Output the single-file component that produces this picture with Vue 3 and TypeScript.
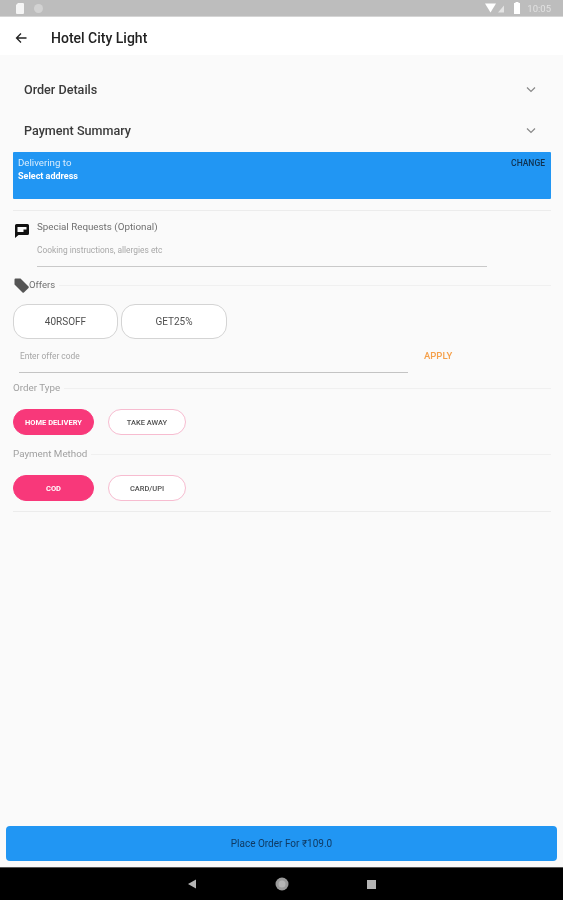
<script setup lang="ts">
import { ref } from 'vue';

const offers = ['40RSOFF', 'GET25%'];
const orderTypes = ['HOME DELIVERY', 'TAKE AWAY'];
const paymentMethods = ['COD', 'CARD/UPI'];

const orderType = ref('HOME DELIVERY');
const paymentMethod = ref('COD');
</script>

<template>
  <div class="screen">
    <div class="status-bar">
      <div class="status-left">
        <svg width="8" height="11" viewBox="0 0 8 11"><path d="M2 0h5a1 1 0 0 1 1 1v9a1 1 0 0 1-1 1H1a1 1 0 0 1-1-1V2z" fill="#f5f5f5" /></svg>
        <svg width="9" height="9" viewBox="0 0 9 9"><circle cx="4.500" cy="4.500" r="4.500" fill="#d2d2d2" /></svg>
      </div>
      <div class="status-right">
        <svg class="signal" width="20" height="10" viewBox="0 0 20 10"><path d="M0 0.500h11L5.500 9.500z" fill="#fff" /><path d="M13 9.500l6-7v7z" fill="#e4e4e4" /></svg>
        <svg class="battery" width="6" height="12" viewBox="0 0 6 12"><path d="M1.500 0h3v1H6v11H0V1h1.500z" fill="#fff" /></svg>
        <span class="clock">10:05</span>
      </div>
    </div>

    <header class="toolbar">
      <svg class="back" width="12" height="12" viewBox="0 0 12 12"><path d="M11.500 6H1.500M6 1.500L1.500 6 6 10.500" fill="none" stroke="#222" stroke-width="1.300" /></svg>
      <h1>Hotel City Light</h1>
    </header>

    <main class="content">
      <div class="accordion first">
        <span>Order Details</span>
        <svg width="12" height="8" viewBox="0 0 12 8"><path d="M2 1.500l4 4 4-4" fill="none" stroke="#888" stroke-width="1.200" /></svg>
      </div>
      <div class="accordion">
        <span>Payment Summary</span>
        <svg width="12" height="8" viewBox="0 0 12 8"><path d="M2 1.500l4 4 4-4" fill="none" stroke="#888" stroke-width="1.200" /></svg>
      </div>

      <section class="address">
        <div>
          <p class="address-label">Delivering to</p>
          <p class="address-value">Select address</p>
        </div>
        <span class="change">CHANGE</span>
      </section>

      <hr class="divider" />

      <section class="requests">
        <svg class="request-icon" width="14" height="14" viewBox="0 0 14 14"><path d="M1.500 0h11A1.500 1.500 0 0 1 14 1.500v8a1.500 1.500 0 0 1-1.500 1.500H3.500L0 14V1.500A1.500 1.500 0 0 1 1.500 0zM2.500 3v5h6V5.500h3V3z" fill="#111" fill-rule="evenodd" /></svg>
        <div class="request-body">
          <p class="request-title">Special Requests (Optional)</p>
          <p class="request-hint">Cooking instructions, allergies etc</p>
        </div>
      </section>

      <div class="section-title offers-title">
        <svg width="15" height="15" viewBox="0 0 15 15"><path d="M0.500 1.500A1 1 0 0 1 1.500 0.500H6.500L14.500 8.500a1 1 0 0 1 0 1.400L9.900 14.500a1 1 0 0 1-1.400 0L0.500 6.500z" fill="#555" /></svg>
        <span>Offers</span>
        <i></i>
      </div>

      <div class="chips">
        <button v-for="offer in offers" :key="offer" class="chip">{{ offer }}</button>
      </div>

      <div class="code-row">
        <div class="code-input">Enter offer code</div>
        <span class="apply">APPLY</span>
      </div>

      <div class="section-title order-title">
        <span>Order Type</span>
        <i></i>
      </div>
      <div class="pills">
        <button
          v-for="item in orderTypes"
          :key="item"
          class="pill"
          :class="{ active: orderType === item }"
          @click="orderType = item"
        >{{ item }}</button>
      </div>

      <div class="section-title payment-title">
        <span>Payment Method</span>
        <i></i>
      </div>
      <div class="pills">
        <button
          v-for="item in paymentMethods"
          :key="item"
          class="pill"
          :class="{ active: paymentMethod === item }"
          @click="paymentMethod = item"
        >{{ item }}</button>
      </div>

      <hr class="divider last" />

      <div class="spacer"></div>

      <button class="place-order">Place Order For ₹109.0</button>
    </main>

    <nav class="nav-bar">
      <svg width="10" height="10" viewBox="0 0 10 10"><path d="M9 0.500v9L1 5z" fill="#b5b5b5" /></svg>
      <svg width="14" height="14" viewBox="0 0 14 14"><circle cx="7" cy="7" r="6.500" fill="#9a9a9a" /><circle cx="7" cy="7" r="3.500" fill="#b5b5b5" /></svg>
      <svg width="9" height="9" viewBox="0 0 9 9"><rect width="9" height="9" fill="#b5b5b5" /></svg>
    </nav>
  </div>
</template>

<style>
html,
body {
  margin: 0;
  background: #fafafa;
}
</style>

<style scoped>
.screen {
  width: 563px;
  height: 900px;
  display: flex;
  flex-direction: column;
  overflow: hidden;
  font-family: Roboto, "Liberation Sans", sans-serif;
  filter: blur(0.6px);
}

p {
  margin: 0;
}

button {
  font-family: inherit;
  padding: 0;
  cursor: pointer;
}

.status-bar {
  height: 16px;
  flex: none;
  background: #bdbdbd;
  display: flex;
  align-items: center;
  justify-content: space-between;
  padding: 0 12px 0 16px;
  border-bottom: 1px solid #d5d5d5;
}

.status-left {
  display: flex;
  align-items: center;
  gap: 10px;
}

.status-right {
  display: flex;
  align-items: center;
}

.battery {
  margin-left: 9px;
}

.clock {
  color: #e2e2e2;
  font-size: 9.500px;
  margin-left: 7px;
}

.toolbar {
  height: 38px;
  box-sizing: border-box;
  flex: none;
  background: #fff;
  display: flex;
  align-items: center;
  padding: 3px 0 0 15px;
}

.back {
  margin-right: 24px;
}

.toolbar h1 {
  margin: 0;
  font-size: 14px;
  font-weight: 500;
  color: #222;
}

.content {
  flex: 1;
  background: #fafafa;
  display: flex;
  flex-direction: column;
  padding: 0 12px 6px 13px;
  min-height: 0;
}

.accordion {
  height: 41px;
  flex: none;
  display: flex;
  align-items: center;
  justify-content: space-between;
  padding: 0 14px 0 11px;
  font-size: 12.600px;
  font-weight: 500;
  color: #3a3a3a;
}

.accordion.first {
  margin-top: 14px;
}

.address {
  height: 47px;
  flex: none;
  margin-top: 1px;
  background: #2196f3;
  border-radius: 1px;
  display: flex;
  justify-content: space-between;
  padding: 5px 6px 0 5px;
  box-sizing: border-box;
}

.address-label {
  color: #d8ecfd;
  font-size: 9.700px;
  line-height: 12px;
}

.address-value {
  color: #fff;
  font-size: 9px;
  font-weight: 700;
  line-height: 12px;
  margin-top: 1px;
}

.change {
  color: #10314f;
  font-size: 8.500px;
  font-weight: 500;
  line-height: 12px;
}

.divider {
  height: 1px;
  flex: none;
  border: 0;
  margin: 11px 0 0;
  background: #ececec;
}

.requests {
  display: flex;
  flex: none;
  margin-top: 11px;
  margin-left: 2px;
}

.request-icon {
  margin-top: 2px;
  margin-right: 8px;
}

.request-body {
  width: 450px;
  height: 44px;
  border-bottom: 1px solid #c9c9c9;
}

.request-title {
  font-size: 9.800px;
  line-height: 10px;
  color: #707070;
}

.request-hint {
  font-size: 8.400px;
  line-height: 10px;
  color: #a8a8a8;
  margin-top: 13px;
}

.section-title {
  display: flex;
  flex: none;
  align-items: center;
  font-size: 9.800px;
  line-height: 12px;
  color: #a0a0a0;
}

.section-title i {
  flex: 1;
  height: 1px;
  background: #f0f0f0;
  margin-left: 4px;
}

.offers-title {
  margin-top: 11px;
  margin-left: 1px;
  height: 14px;
  color: #707070;
  font-size: 9.500px;
}

.chips {
  display: flex;
  flex: none;
  gap: 3px;
  margin-top: 12px;
}

.chip {
  width: 105px;
  height: 35px;
  border: 1px solid #d4d4d4;
  border-radius: 14px;
  background: #fff;
  color: #505050;
  font-size: 10px;
}

.chip + .chip {
  width: 106px;
}

.code-row {
  display: flex;
  flex: none;
  margin-top: 10px;
  margin-left: 6px;
}

.code-input {
  width: 388px;
  height: 23px;
  padding-left: 1px;
  border-bottom: 1px solid #c4c4c4;
  color: #a5a5a5;
  font-size: 8.400px;
  line-height: 14px;
}

.apply {
  margin-left: 16px;
  color: #f5a04a;
  font-size: 9.500px;
  font-weight: 500;
  line-height: 14px;
}

.order-title {
  margin-top: 9px;
}

.payment-title {
  margin-top: 13px;
}

.pills {
  display: flex;
  flex: none;
  gap: 14px;
  margin-top: 15px;
}

.pill {
  height: 26px;
  border-radius: 13px;
  border: 1px solid #f7bcd0;
  background: #fff;
  color: #505050;
  font-size: 7.500px;
  font-weight: 500;
  width: 78px;
}

.pill.active {
  width: 81px;
  background: #f8387a;
  border-color: #f8387a;
  color: #fff;
  font-weight: 700;
}

.divider.last {
  margin-top: 10px;
}

.spacer {
  flex: 1;
}

.place-order {
  height: 35px;
  flex: none;
  margin: 0 -6px 0 -7px;
  border: 0;
  border-radius: 4px;
  background: #2196f3;
  color: #0f3a63;
  font-size: 10px;
}

.nav-bar {
  height: 33px;
  box-sizing: border-box;
  flex: none;
  background: #000;
  display: flex;
  align-items: center;
  justify-content: center;
  gap: 78px;
  border-top: 1px solid #555;
}
</style>
